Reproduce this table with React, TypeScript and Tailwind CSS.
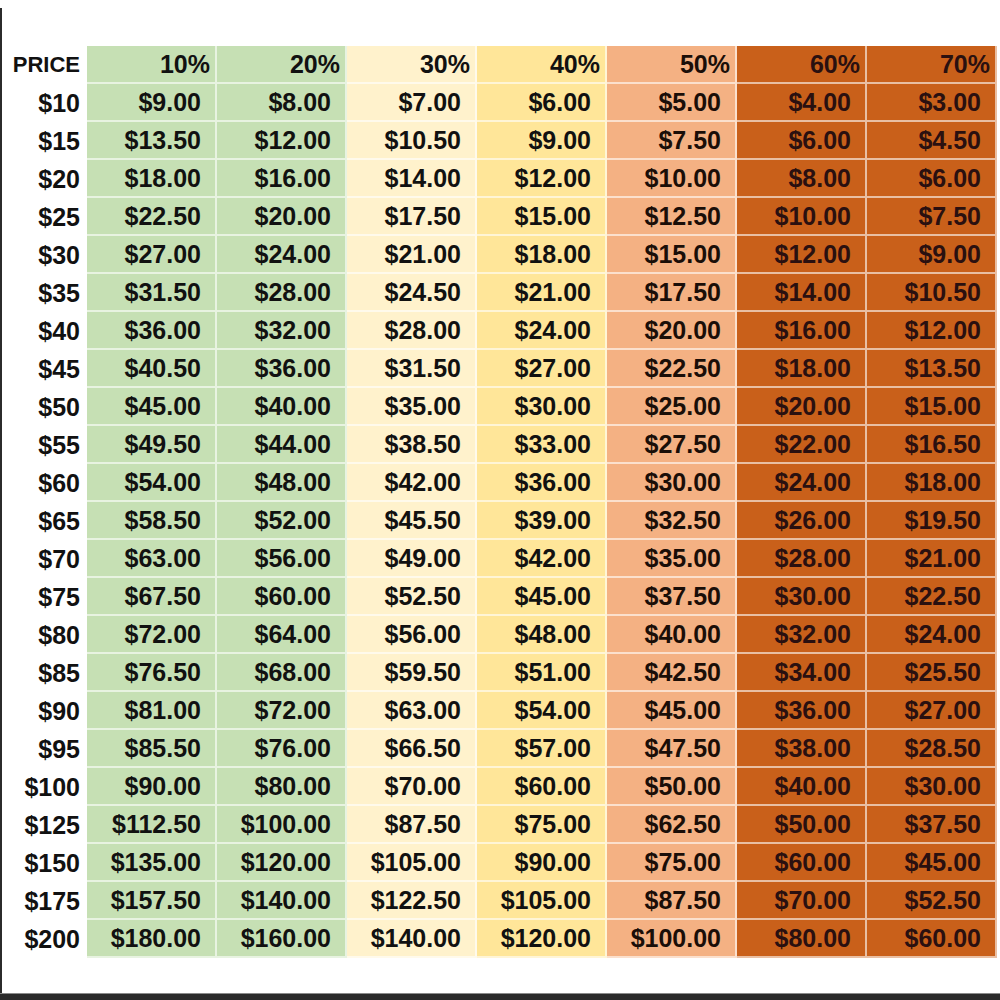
import * as React from "react";

const prices = [10, 15, 20, 25, 30, 35, 40, 45, 50, 55, 60, 65, 70, 75, 80, 85, 90, 95, 100, 125, 150, 175, 200];

const columns = [
  { pct: 10, bg: "bg-[#c6e0b4]", text: "text-[#111]" },
  { pct: 20, bg: "bg-[#c6e0b4]", text: "text-[#111]" },
  { pct: 30, bg: "bg-[#fff2cc]", text: "text-[#111]" },
  { pct: 40, bg: "bg-[#ffe699]", text: "text-[#111]" },
  { pct: 50, bg: "bg-[#f4b183]", text: "text-[#1a0e08]" },
  { pct: 60, bg: "bg-[#c9601a]", text: "text-[#2a1010]" },
  { pct: 70, bg: "bg-[#c9601a]", text: "text-[#2a1010]" },
];

const money = (n: number) => "$" + n.toFixed(2);

export default function App() {
  return (
    <div
      className="w-[1000px] h-[1000px] bg-white flex flex-col overflow-hidden"
      style={{ fontFamily: '"Liberation Sans", Arial, sans-serif' }}
    >
      <div className="flex flex-1">
        <div className="w-[2px] mt-[8px] bg-[#2b2b2b]" />
        <div className="flex-1 pt-[46px]">
          <div className="grid grid-cols-[85px_repeat(7,130px)] font-bold text-[25px] leading-none">
            {/* header */}
            <div className="h-[38px] flex items-center justify-end pr-[7px] text-[22px] text-[#111]">
              PRICE
            </div>
            {columns.map((c) => (
              <div
                key={c.pct}
                className={`h-[38px] flex items-center justify-end pr-[5px] border-r-2 border-b-2 border-white/60 ${c.bg} ${c.text}`}
              >
                {c.pct}%
              </div>
            ))}
            {prices.map((p) => (
              <React.Fragment key={p}>
                <div className="h-[38px] flex items-center justify-end pr-[7px] text-[#111]">
                  ${p}
                </div>
                {columns.map((c) => (
                  <div
                    key={c.pct}
                    className={`h-[38px] flex items-center justify-end pr-[14px] border-r-2 border-b-2 border-white/60 ${c.bg} ${c.text}`}
                  >
                    {money((p * (100 - c.pct)) / 100)}
                  </div>
                ))}
              </React.Fragment>
            ))}
          </div>
        </div>
      </div>
      <div className="h-[7px] bg-[#2a2a2a] border-t border-[#8a8a8a]" />
    </div>
  );
}
